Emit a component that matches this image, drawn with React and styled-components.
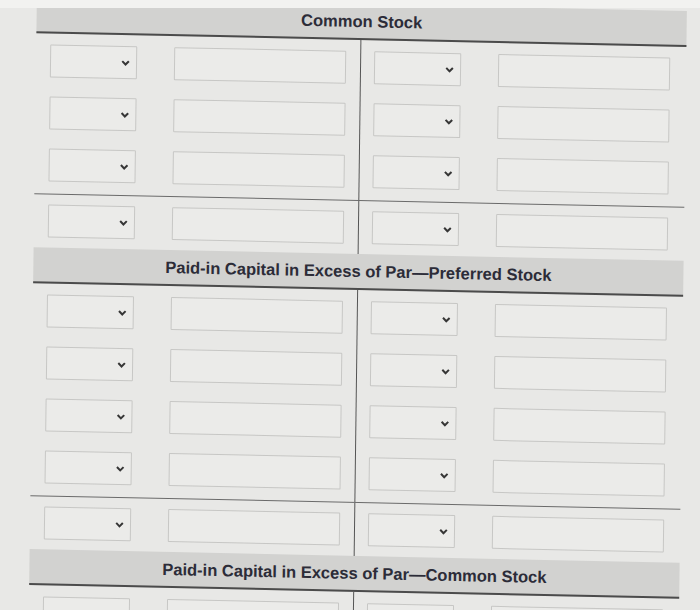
import styled, { createGlobalStyle } from "styled-components";

const GlobalStyle = createGlobalStyle`
  body {
    margin: 0;
    background-color: #e8e8e6;
    font-family: "Liberation Sans", Arial, sans-serif;
    overflow: hidden;
  }
`;

const Page = styled.div`
  position: relative;
  width: 700px;
  height: 610px;
  overflow: hidden;
  background-color: #e8e8e6;
`;

const TopBar = styled.div`
  position: absolute;
  top: 0;
  left: 0;
  right: 0;
  height: 8px;
  background-color: #f2f2f0;
  z-index: 2;
`;

const Sheet = styled.div`
  width: 650px;
  margin: 4px 0 0 33px;
  transform: skewY(1.2deg) skewX(-0.75deg);
  transform-origin: 50% 296px;
`;

const Header = styled.div`
  height: 34px;
  display: flex;
  align-items: center;
  justify-content: center;
  background-color: #d2d2d0;
  border-bottom: 2px solid #4b4b4b;
  color: #2c2c38;
  font-size: 16.5px;
  font-weight: 700;
`;

const Body = styled.div`
  display: grid;
  grid-template-columns: 1fr 1fr;
`;

const Cell = styled.div`
  display: flex;
  align-items: center;
  gap: 37px;
  padding: ${(p) => p.$pt}px 0 ${(p) => p.$pb}px ${(p) => (p.$right ? 13 : 14)}px;
  border-right: ${(p) => (p.$right ? "none" : "1px solid #555")};
`;

const Rule = styled.div`
  grid-column: 1 / -1;
  height: 1px;
  background-color: #6a6a6a;
`;

const SelectBox = styled.div`
  position: relative;
  box-sizing: border-box;
  width: 87px;
  height: 33px;
  border: 1px solid #c7c7c5;
  border-radius: 1px;
  background-color: #ebebe9;
`;

const Chevron = styled.svg`
  position: absolute;
  right: 6px;
  top: 13px;
`;

const InputBox = styled.div`
  box-sizing: border-box;
  width: 172px;
  height: 33px;
  border: 1px solid #c7c7c5;
  border-radius: 1px;
  background-color: #ebebe9;
`;

const Select = () => (
  <SelectBox>
    <Chevron width="9" height="6" viewBox="0 0 9 6">
      <polyline points="1.2,1 4.5,4.4 7.8,1" fill="none" stroke="#363636" strokeWidth="2" />
    </Chevron>
  </SelectBox>
);

const EntryRow = ({ pt, pb }) => (
  <>
    <Cell $pt={pt} $pb={pb}>
      <Select />
      <InputBox />
    </Cell>
    <Cell $pt={pt} $pb={pb} $right>
      <Select />
      <InputBox />
    </Cell>
  </>
);

const Account = ({ title, rows, total = true }) => (
  <div>
    <Header>{title}</Header>
    <Body>
      {Array.from({ length: rows }).map((_, i) => (
        <EntryRow key={i} pt={i === 0 ? 11 : 10} pb={i === rows - 1 && total ? 12 : 9} />
      ))}
      {total && (
        <>
          <Rule />
          <EntryRow pt={10} pb={10} />
        </>
      )}
    </Body>
  </div>
);

export default function App() {
  return (
    <>
      <GlobalStyle />
      <Page>
        <TopBar />
        <Sheet>
          <Account title="Common Stock" rows={3} />
          <Account title="Paid-in Capital in Excess of Par—Preferred Stock" rows={4} />
          <Account title="Paid-in Capital in Excess of Par—Common Stock" rows={1} total={false} />
        </Sheet>
      </Page>
    </>
  );
}
